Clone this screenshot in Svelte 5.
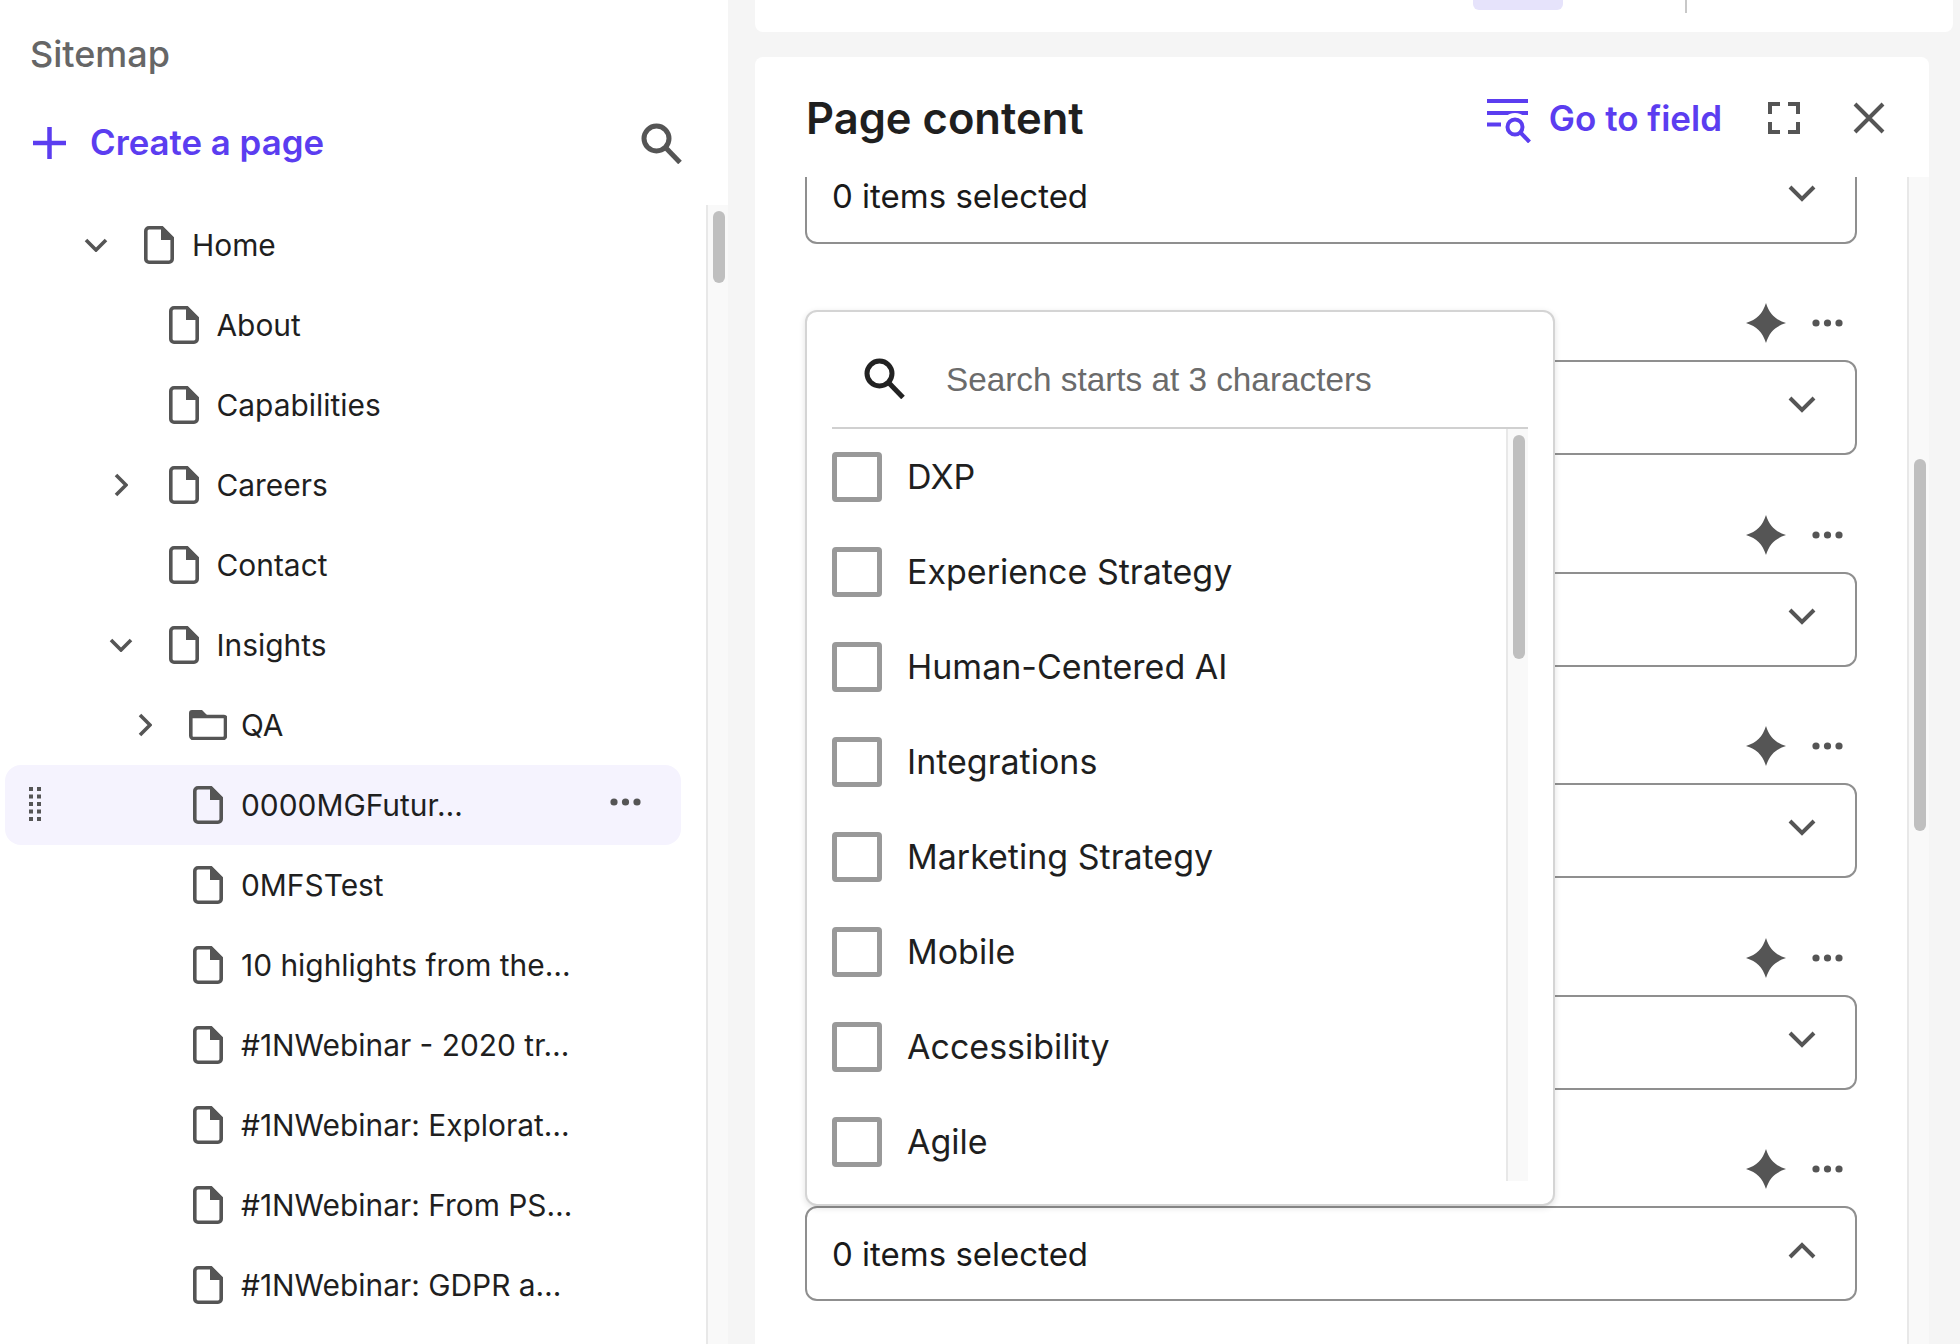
<script lang="ts">
	const pages = [
		{ name: 'Home', depth: 0, toggle: 'down' },
		{ name: 'About', depth: 1 },
		{ name: 'Capabilities', depth: 1 },
		{ name: 'Careers', depth: 1, toggle: 'right' },
		{ name: 'Contact', depth: 1 },
		{ name: 'Insights', depth: 1, toggle: 'down' },
		{ name: 'QA', depth: 2, toggle: 'right', folder: true },
		{ name: '0000MGFutur…', depth: 2, active: true },
		{ name: '0MFSTest', depth: 2 },
		{ name: '10 highlights from the…', depth: 2 },
		{ name: '#1NWebinar - 2020 tr…', depth: 2 },
		{ name: '#1NWebinar: Explorat…', depth: 2 },
		{ name: '#1NWebinar: From PS…', depth: 2 },
		{ name: '#1NWebinar: GDPR a…', depth: 2 }
	];

	const topics = [
		'DXP',
		'Experience Strategy',
		'Human-Centered AI',
		'Integrations',
		'Marketing Strategy',
		'Mobile',
		'Accessibility',
		'Agile'
	];

	// The first field is scrolled partly out of view, the other five are whole.
	const fields = [0, 1, 2, 3, 4];
</script>

{#snippet searchIcon()}
	<svg viewBox="0 0 41 41" width="41" height="41" fill="none" stroke="currentColor" stroke-width="5">
		<circle cx="15.5" cy="15.5" r="12.5" />
		<path d="M24.5 24.5 39 39.5" />
	</svg>
{/snippet}

{#snippet chevron(up = false)}
	<svg class="select-chevron" viewBox="0 0 28 17" width="28" height="17" fill="none" stroke="#555" stroke-width="4">
		<path d={up ? 'M2 15 14 3 26 15' : 'M2 2 14 14 26 2'} />
	</svg>
{/snippet}

{#snippet moreDots()}
	<svg viewBox="0 0 31 8" width="31" height="8" fill="#555">
		<circle cx="4" cy="4" r="3.6" /><circle cx="15.5" cy="4" r="3.6" /><circle cx="27" cy="4" r="3.6" />
	</svg>
{/snippet}

<div class="app">
	<aside class="sidebar">
		<h2 class="sitemap">Sitemap</h2>
		<div class="create-row">
			<svg viewBox="0 0 33 32" width="33" height="32" fill="none" stroke="#5b3df0" stroke-width="4.5">
				<path d="M16.5 0v32M0 16h33" />
			</svg>
			<span class="create-label">Create a page</span>
			<span class="sidebar-search">{@render searchIcon()}</span>
		</div>
		<div class="tree-wrap">
			<div class="tree">
				{#each pages as page}
					<div class="row" class:active={page.active} style="padding-left: {79 + page.depth * 24.5}px">
						{#if page.active}
							<svg class="grip" viewBox="0 0 12 34" width="12" height="34" fill="#555">
								{#each [0, 7.5, 15, 22.5, 30] as y}
									<rect x="0" {y} width="4" height="4" /><rect x="8" {y} width="4" height="4" />
								{/each}
							</svg>
						{/if}
						<span class="toggle">
							{#if page.toggle === 'down'}
								<svg viewBox="0 0 24 14" width="24" height="14" fill="none" stroke="#555" stroke-width="3.6">
									<path d="M2 2 12 12 22 2" />
								</svg>
							{:else if page.toggle === 'right'}
								<svg viewBox="0 0 14 24" width="14" height="24" fill="none" stroke="#555" stroke-width="3.6">
									<path d="M2 2 12 12 2 22" />
								</svg>
							{/if}
						</span>
						<span class="node-icon">
							{#if page.folder}
								<svg viewBox="0 0 38 30" width="38" height="30" fill="none" stroke="#555" stroke-width="3.6">
									<path d="M2 6.500h33a1.500 1.500 0 0 1 1.500 1.500v18a2.500 2.500 0 0 1-2.500 2.500H4A2.500 2.500 0 0 1 1.800 26V6" />
									<path d="M0 8V3a3 3 0 0 1 3-3h10l5 5h-3z" fill="#555" stroke="none" />
								</svg>
							{:else}
								<svg viewBox="0 0 30 38" width="30" height="38" fill="none" stroke="#555" stroke-width="3.6">
									<path d="M5 1.800h13L28.200 12v21a3.200 3.200 0 0 1-3.200 3.200H5A3.200 3.200 0 0 1 1.800 33V5A3.200 3.200 0 0 1 5 1.800z" />
									<path d="M17 1h2l10 10v3H17z" fill="#555" stroke="none" />
								</svg>
							{/if}
						</span>
						<span class="node-name">{page.name}</span>
						{#if page.active}
							<span class="row-more">{@render moreDots()}</span>
						{/if}
					</div>
				{/each}
			</div>
			<div class="track"><div class="thumb tree-thumb"></div></div>
		</div>
	</aside>

	<main class="main">
		<div class="toolbar-card">
			<div class="toolbar-tab"></div>
			<div class="toolbar-divider"></div>
		</div>

		<section class="content-card">
			<header class="content-header">
				<h1>Page content</h1>
				<button class="go-to-field">
					<svg viewBox="0 0 44 44" width="44" height="44" fill="none" stroke="#5b3df0" stroke-width="4">
						<path d="M0 2h41M0 14h41M0 25.500h14" />
						<circle cx="28" cy="28" r="12" stroke="#fff" fill="#fff" />
						<circle cx="28" cy="28" r="7.500" />
						<path d="M33.500 33.500 42.500 43" />
					</svg>
					<span>Go to field</span>
				</button>
				<svg class="fullscreen" viewBox="0 0 32 32" width="32" height="32" fill="none" stroke="#555" stroke-width="4">
					<path d="M2 12V2h10M20 2h10v10M30 20v10H20M12 30H2V20" />
				</svg>
				<svg class="close" viewBox="0 0 32 32" width="32" height="32" fill="none" stroke="#555" stroke-width="4">
					<path d="M2 2 30 30M30 2 2 30" />
				</svg>
			</header>

			<div class="content-scroll">
				<div class="content-body">
					<div class="fields">
						<div class="select">
							<span>0 items selected</span>
							{@render chevron()}
						</div>
						{#each fields as field}
							<div class="field">
								<div class="field-actions">
									<svg viewBox="0 0 40 40" width="40" height="40" fill="#555">
										<path d="M20 0C23.500 11 29 16.500 40 20 29 23.500 23.500 29 20 40 16.500 29 11 23.500 0 20 11 16.500 16.500 11 20 0z" />
									</svg>
									{@render moreDots()}
								</div>
								<div class="select">
									{#if field === 4}<span>0 items selected</span>{/if}
									{@render chevron(field === 4)}
								</div>
							</div>
						{/each}
					</div>

					<div class="dropdown">
						<div class="dropdown-search">
							<span class="dropdown-search-icon">{@render searchIcon()}</span>
							<input placeholder="Search starts at 3 characters" />
						</div>
						<div class="dropdown-list">
							<ul>
								{#each topics as topic}
									<li><span class="checkbox"></span>{topic}</li>
								{/each}
							</ul>
							<div class="track"><div class="thumb list-thumb"></div></div>
						</div>
					</div>
				</div>
				<div class="track"><div class="thumb body-thumb"></div></div>
			</div>
		</section>
	</main>
</div>

<style>
	:global(body) {
		margin: 0;
		font-family: Inter, 'Liberation Sans', sans-serif;
		color: #1f1f1f;
	}
	.app {
		display: grid;
		grid-template-columns: 728px 1fr;
		height: 1344px;
		overflow: hidden;
		background: #f5f5f5;
	}

	/* Sidebar */
	.sidebar {
		display: flex;
		flex-direction: column;
		min-height: 0;
		background: #fff;
	}
	.sitemap {
		margin: 32px 0 0 30px;
		font-size: 36px;
		line-height: 44px;
		font-weight: 500;
		color: #666;
	}
	.create-row {
		display: flex;
		align-items: center;
		height: 60px;
		margin-top: 37px;
		padding-left: 33px;
	}
	.create-label {
		margin-left: 24px;
		margin-bottom: 2px;
		font-size: 34.8px;
		font-weight: 600;
		color: #5b3df0;
	}
	.sidebar-search {
		display: flex;
		margin-left: auto;
		margin-right: 46px;
		color: #555;
	}
	.tree-wrap {
		display: flex;
		flex: 1;
		min-height: 0;
		margin-top: 32px;
	}
	.tree {
		flex: 1;
		min-width: 0;
	}
	.row {
		position: relative;
		display: flex;
		align-items: center;
		height: 80px;
		margin: 0 25px 0 5px;
		border-radius: 16px;
	}
	.row.active {
		background: #f5f3fe;
	}
	.grip {
		position: absolute;
		left: 24px;
		top: 22px;
	}
	.toggle {
		display: flex;
		justify-content: center;
		width: 24px;
		margin-right: 32px;
	}
	.node-icon {
		display: flex;
		justify-content: center;
		width: 38px;
		margin-right: 14px;
	}
	.node-name {
		font-size: 29.9px;
		white-space: nowrap;
	}
	.row-more {
		display: flex;
		margin-left: auto;
		margin-right: 40px;
		margin-bottom: 6px;
	}
	.track {
		flex: none;
		box-sizing: border-box;
		width: 22px;
		padding: 6px 3px 0 5px;
		background: #f9f9f9;
		border-left: 2px solid #e8e8e8;
	}
	.thumb {
		width: 12px;
		border-radius: 6px;
		background: #bfbfbf;
	}
	.tree-thumb {
		height: 72px;
	}

	/* Main */
	.main {
		display: flex;
		flex-direction: column;
		min-height: 0;
		padding-left: 27px;
	}
	.toolbar-card {
		display: flex;
		align-items: flex-start;
		flex: none;
		height: 32px;
		margin-right: 7px;
		padding-left: 718px;
		background: #fff;
		border-radius: 0 0 8px 8px;
	}
	.toolbar-tab {
		width: 90px;
		height: 10px;
		background: #e6e3fb;
		border-radius: 0 0 6px 6px;
	}
	.toolbar-divider {
		width: 2px;
		height: 13px;
		margin-left: 122px;
		background: #c8c8c8;
	}
	.content-card {
		flex: 1;
		min-height: 0;
		display: flex;
		flex-direction: column;
		margin-top: 25px;
		margin-right: 31px;
		background: #fff;
		border-radius: 8px 8px 0 0;
	}
	.content-header {
		flex: none;
		box-sizing: border-box;
		display: flex;
		align-items: center;
		height: 120px;
		padding: 1px 44px 0 51px;
	}
	h1 {
		margin: 0;
		font-size: 43.5px;
		font-weight: 600;
	}
	.go-to-field {
		display: flex;
		align-items: center;
		gap: 18px;
		margin-left: auto;
		padding: 0;
		border: 0;
		background: none;
		font: 600 35px Inter, sans-serif;
		color: #5b3df0;
	}
	.go-to-field svg {
		margin-top: 7px;
	}
	.fullscreen {
		margin-left: 46px;
	}
	.close {
		margin-left: 53px;
	}
	.content-scroll {
		flex: 1;
		min-height: 0;
		display: flex;
	}
	.content-body {
		position: relative;
		flex: 1;
		min-width: 0;
		overflow: hidden;
	}
	.body-thumb {
		height: 372px;
		margin-top: 276px;
	}
	.fields {
		margin-top: -28.5px;
		padding: 0 50px;
	}
	.field {
		padding-top: 59.5px;
	}
	.field-actions {
		display: flex;
		align-items: center;
		justify-content: flex-end;
		gap: 26px;
		height: 40px;
		margin-bottom: 17px;
		padding-right: 14px;
	}
	.select {
		box-sizing: border-box;
		display: flex;
		align-items: center;
		height: 95px;
		padding: 0 39px 0 25px;
		border: 2px solid #8f8f8f;
		border-radius: 12px;
		font-size: 33px;
		color: #1a1a1a;
	}
	.select-chevron {
		margin-left: auto;
		margin-bottom: 6px;
	}

	/* Dropdown open over the fields */
	.dropdown {
		position: absolute;
		left: 50px;
		top: 133px;
		box-sizing: border-box;
		display: flex;
		flex-direction: column;
		width: 750px;
		height: 896px;
		padding: 0 25px 23px;
		background: #fff;
		border: 2px solid #d4d4d4;
		border-radius: 12px;
		box-shadow: 0 2px 6px rgba(0, 0, 0, 0.12);
	}
	.dropdown-search {
		flex: none;
		box-sizing: border-box;
		display: flex;
		align-items: center;
		height: 117px;
		padding: 21px 0 0 32px;
		border-bottom: 2px solid #d0d0d0;
	}
	.dropdown-search-icon {
		display: flex;
		margin-bottom: 3px;
		color: #222;
	}
	.dropdown-search input {
		flex: 1;
		min-width: 0;
		margin-left: 41px;
		padding: 0;
		border: 0;
		outline: 0;
		background: none;
		font: 33.3px 'Liberation Sans', Arial, sans-serif;
	}
	.dropdown-search input::placeholder {
		color: #6b6b6b;
		opacity: 1;
	}
	.dropdown-list {
		flex: 1;
		min-height: 0;
		display: flex;
	}
	ul {
		flex: 1;
		margin: 0;
		padding: 0;
		list-style: none;
	}
	li {
		display: flex;
		align-items: center;
		gap: 25px;
		height: 95px;
		font-size: 34px;
	}
	.checkbox {
		box-sizing: border-box;
		width: 50px;
		height: 50px;
		border: 5px solid #999;
		border-radius: 4px;
	}
	.list-thumb {
		height: 224px;
	}
</style>
